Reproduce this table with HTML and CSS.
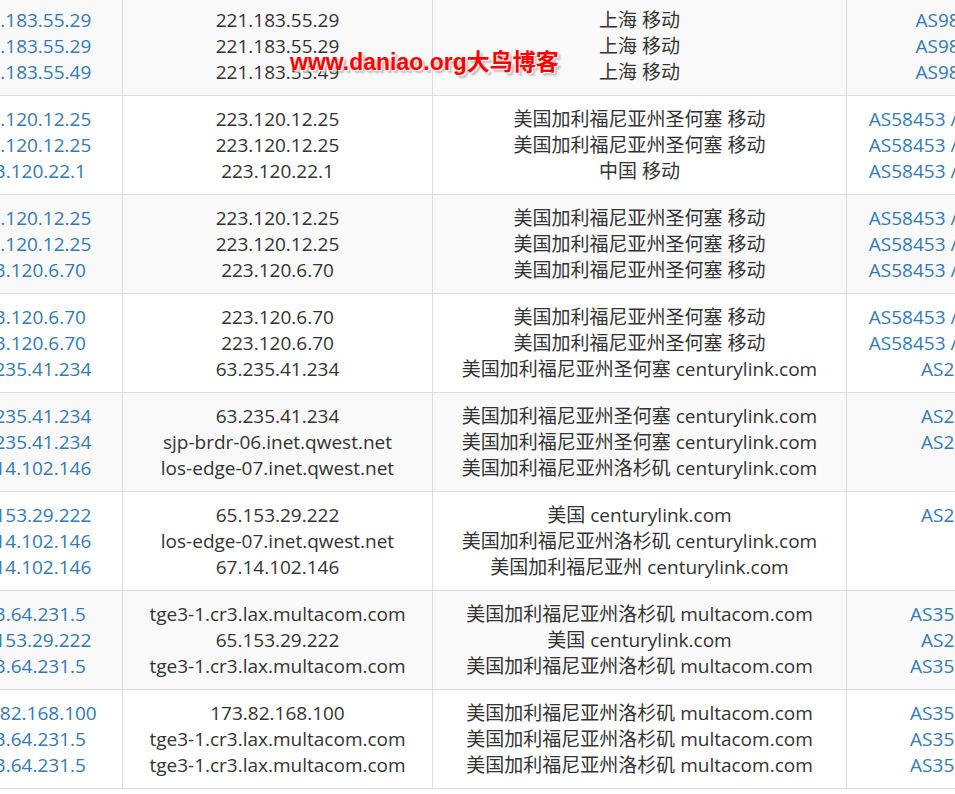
FILE: index.html
```html
<!DOCTYPE html>
<html lang="zh-CN">
<head>
  <meta charset="UTF-8" />
  <meta name="viewport" content="width=device-width, initial-scale=1.0"/>
  <title>路由追踪结果</title>
  <link rel="stylesheet" href="styles.css">
</head>
<body>
  <div class="viewport">
    <table class="trace">
      <colgroup>
        <col class="col-ip">
        <col class="col-host">
        <col class="col-loc">
        <col class="col-as">
      </colgroup>
      <tbody>
        <tr>
          <td><a href="#">221.183.55.29</a><br><a href="#">221.183.55.29</a><br><a href="#">221.183.55.49</a></td>
          <td>221.183.55.29<br>221.183.55.29<br>221.183.55.49</td>
          <td>上海 移动<br>上海 移动<br>上海 移动</td>
          <td><a href="#">AS9808</a><br><a href="#">AS9808</a><br><a href="#">AS9808</a></td>
        </tr>
        <tr>
          <td><a href="#">223.120.12.25</a><br><a href="#">223.120.12.25</a><br><a href="#">223.120.22.1</a></td>
          <td>223.120.12.25<br>223.120.12.25<br>223.120.22.1</td>
          <td>美国加利福尼亚州圣何塞 移动<br>美国加利福尼亚州圣何塞 移动<br>中国 移动</td>
          <td><a href="#">AS58453 / AS9808</a><br><a href="#">AS58453 / AS9808</a><br><a href="#">AS58453 / AS9808</a></td>
        </tr>
        <tr>
          <td><a href="#">223.120.12.25</a><br><a href="#">223.120.12.25</a><br><a href="#">223.120.6.70</a></td>
          <td>223.120.12.25<br>223.120.12.25<br>223.120.6.70</td>
          <td>美国加利福尼亚州圣何塞 移动<br>美国加利福尼亚州圣何塞 移动<br>美国加利福尼亚州圣何塞 移动</td>
          <td><a href="#">AS58453 / AS9808</a><br><a href="#">AS58453 / AS9808</a><br><a href="#">AS58453 / AS9808</a></td>
        </tr>
        <tr>
          <td><a href="#">223.120.6.70</a><br><a href="#">223.120.6.70</a><br><a href="#">63.235.41.234</a></td>
          <td>223.120.6.70<br>223.120.6.70<br>63.235.41.234</td>
          <td>美国加利福尼亚州圣何塞 移动<br>美国加利福尼亚州圣何塞 移动<br>美国加利福尼亚州圣何塞 centurylink.com</td>
          <td><a href="#">AS58453 / AS9808</a><br><a href="#">AS58453 / AS9808</a><br><a href="#">AS209</a></td>
        </tr>
        <tr>
          <td><a href="#">63.235.41.234</a><br><a href="#">63.235.41.234</a><br><a href="#">67.14.102.146</a></td>
          <td>63.235.41.234<br>sjp-brdr-06.inet.qwest.net<br>los-edge-07.inet.qwest.net</td>
          <td>美国加利福尼亚州圣何塞 centurylink.com<br>美国加利福尼亚州圣何塞 centurylink.com<br>美国加利福尼亚州洛杉矶 centurylink.com</td>
          <td><a href="#">AS209</a><br><a href="#">AS209</a></td>
        </tr>
        <tr>
          <td><a href="#">65.153.29.222</a><br><a href="#">67.14.102.146</a><br><a href="#">67.14.102.146</a></td>
          <td>65.153.29.222<br>los-edge-07.inet.qwest.net<br>67.14.102.146</td>
          <td>美国 centurylink.com<br>美国加利福尼亚州洛杉矶 centurylink.com<br>美国加利福尼亚州 centurylink.com</td>
          <td><a href="#">AS209</a></td>
        </tr>
        <tr>
          <td><a href="#">173.64.231.5</a><br><a href="#">65.153.29.222</a><br><a href="#">173.64.231.5</a></td>
          <td>tge3-1.cr3.lax.multacom.com<br>65.153.29.222<br>tge3-1.cr3.lax.multacom.com</td>
          <td>美国加利福尼亚州洛杉矶 multacom.com<br>美国 centurylink.com<br>美国加利福尼亚州洛杉矶 multacom.com</td>
          <td><a href="#">AS35916</a><br><a href="#">AS209</a><br><a href="#">AS35916</a></td>
        </tr>
        <tr>
          <td><a href="#">173.82.168.100</a><br><a href="#">173.64.231.5</a><br><a href="#">173.64.231.5</a></td>
          <td>173.82.168.100<br>tge3-1.cr3.lax.multacom.com<br>tge3-1.cr3.lax.multacom.com</td>
          <td>美国加利福尼亚州洛杉矶 multacom.com<br>美国加利福尼亚州洛杉矶 multacom.com<br>美国加利福尼亚州洛杉矶 multacom.com</td>
          <td><a href="#">AS35916</a><br><a href="#">AS35916</a><br><a href="#">AS35916</a></td>
        </tr>
      </tbody>
    </table>
    <div class="watermark">www.daniao.org大鸟博客</div>
  </div>
</body>
</html>
```

FILE: styles.css
```css
body {
  margin: 0;
  padding: 0;
  background: #fff;
  font-family: "Open Sans", "Noto Sans CJK SC", sans-serif;
  color: #333;
}

.viewport {
  position: relative;
  width: 955px;
  height: 794px;
  overflow: hidden;
}

.trace {
  border-collapse: collapse;
  table-layout: fixed;
  width: 1114px;
  margin-left: -64px;
  margin-top: -4px;
  font-size: 19px;
  line-height: 26px;
}

.col-ip { width: 186px; }
.col-host { width: 310px; }
.col-loc { width: 414px; }
.col-as { width: 204px; }

.trace td {
  border: 1px solid #ddd;
  padding: 10px 8px;
  text-align: center;
  vertical-align: top;
  white-space: nowrap;
  overflow: hidden;
}

.trace tr:nth-child(odd) td {
  background-color: #f9f9f9;
}

.trace a {
  color: #337ab7;
  text-decoration: none;
}

.watermark {
  position: absolute;
  left: 290px;
  top: 47px;
  font-family: "Liberation Sans", "Noto Sans CJK SC", sans-serif;
  font-size: 23px;
  font-weight: bold;
  line-height: 30px;
  color: #f00;
  text-shadow: 1px 1px 0 #fff, 2px 2px 1px #ccc, 3px 3px 2px #bbb;
}
```
